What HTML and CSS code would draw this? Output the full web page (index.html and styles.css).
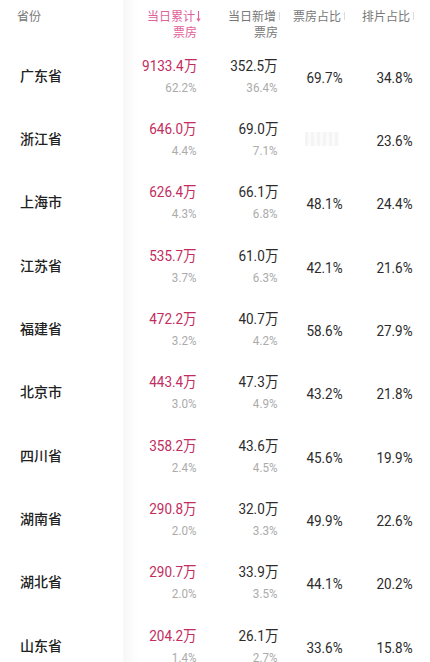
FILE: index.html
```html
<!DOCTYPE html>
<html lang="zh-CN">
<head>
<meta charset="utf-8">
<link rel="stylesheet" href="styles.css">
</head>
<body>
<div class="table">
  <div class="row head">
    <div class="cell name"><span class="h">省份</span></div>
    <div class="cell hc active"><span class="h">当日累计<svg class="sort" viewBox="0 0 5 12" width="5" height="12"><path d="M2.5 1V10.5M0.8 8.5L2.5 10.8L4.2 8.5" fill="none" stroke="currentColor" stroke-width="1.1"/></svg><br>票房<i class="pad"></i></span></div>
    <div class="cell hc"><span class="h">当日新增<svg class="sort" viewBox="0 0 5 12" width="5" height="12"><path d="M2.5 2V10" fill="none" stroke="currentColor" stroke-width="1.1"/></svg><br>票房<i class="pad"></i></span></div>
    <div class="cell hc"><span class="h">票房占比<svg class="sort" viewBox="0 0 5 12" width="5" height="12"><path d="M2.5 2V10" fill="none" stroke="currentColor" stroke-width="1.1"/></svg></span></div>
    <div class="cell hc last"><span class="h">排片占比<svg class="sort" viewBox="0 0 5 12" width="5" height="12"><path d="M2.5 2V10" fill="none" stroke="currentColor" stroke-width="1.1"/></svg></span></div>
  </div>

  <div class="row">
    <div class="cell name">广东省</div>
    <div class="cell val"><span class="main pink">9133.4万</span><span class="sub">62.2%</span></div>
    <div class="cell val"><span class="main">352.5万</span><span class="sub">36.4%</span></div>
    <div class="cell pct"><span class="p">69.7%</span></div>
    <div class="cell pct last"><span class="p">34.8%</span></div>
  </div>
  <div class="row">
    <div class="cell name">浙江省</div>
    <div class="cell val"><span class="main pink">646.0万</span><span class="sub">4.4%</span></div>
    <div class="cell val"><span class="main">69.0万</span><span class="sub">7.1%</span></div>
    <div class="cell pct"><span class="blur"></span></div>
    <div class="cell pct last"><span class="p">23.6%</span></div>
  </div>
  <div class="row">
    <div class="cell name">上海市</div>
    <div class="cell val"><span class="main pink">626.4万</span><span class="sub">4.3%</span></div>
    <div class="cell val"><span class="main">66.1万</span><span class="sub">6.8%</span></div>
    <div class="cell pct"><span class="p">48.1%</span></div>
    <div class="cell pct last"><span class="p">24.4%</span></div>
  </div>
  <div class="row">
    <div class="cell name">江苏省</div>
    <div class="cell val"><span class="main pink">535.7万</span><span class="sub">3.7%</span></div>
    <div class="cell val"><span class="main">61.0万</span><span class="sub">6.3%</span></div>
    <div class="cell pct"><span class="p">42.1%</span></div>
    <div class="cell pct last"><span class="p">21.6%</span></div>
  </div>
  <div class="row">
    <div class="cell name">福建省</div>
    <div class="cell val"><span class="main pink">472.2万</span><span class="sub">3.2%</span></div>
    <div class="cell val"><span class="main">40.7万</span><span class="sub">4.2%</span></div>
    <div class="cell pct"><span class="p">58.6%</span></div>
    <div class="cell pct last"><span class="p">27.9%</span></div>
  </div>
  <div class="row">
    <div class="cell name">北京市</div>
    <div class="cell val"><span class="main pink">443.4万</span><span class="sub">3.0%</span></div>
    <div class="cell val"><span class="main">47.3万</span><span class="sub">4.9%</span></div>
    <div class="cell pct"><span class="p">43.2%</span></div>
    <div class="cell pct last"><span class="p">21.8%</span></div>
  </div>
  <div class="row">
    <div class="cell name">四川省</div>
    <div class="cell val"><span class="main pink">358.2万</span><span class="sub">2.4%</span></div>
    <div class="cell val"><span class="main">43.6万</span><span class="sub">4.5%</span></div>
    <div class="cell pct"><span class="p">45.6%</span></div>
    <div class="cell pct last"><span class="p">19.9%</span></div>
  </div>
  <div class="row">
    <div class="cell name">湖南省</div>
    <div class="cell val"><span class="main pink">290.8万</span><span class="sub">2.0%</span></div>
    <div class="cell val"><span class="main">32.0万</span><span class="sub">3.3%</span></div>
    <div class="cell pct"><span class="p">49.9%</span></div>
    <div class="cell pct last"><span class="p">22.6%</span></div>
  </div>
  <div class="row">
    <div class="cell name">湖北省</div>
    <div class="cell val"><span class="main pink">290.7万</span><span class="sub">2.0%</span></div>
    <div class="cell val"><span class="main">33.9万</span><span class="sub">3.5%</span></div>
    <div class="cell pct"><span class="p">44.1%</span></div>
    <div class="cell pct last"><span class="p">20.2%</span></div>
  </div>
  <div class="row">
    <div class="cell name">山东省</div>
    <div class="cell val"><span class="main pink">204.2万</span><span class="sub">1.4%</span></div>
    <div class="cell val"><span class="main">26.1万</span><span class="sub">2.7%</span></div>
    <div class="cell pct"><span class="p">33.6%</span></div>
    <div class="cell pct last"><span class="p">15.8%</span></div>
  </div>
</div>
</body>
</html>
```
FILE: styles.css
```css
* { box-sizing: border-box; }
html, body {
  margin: 0;
  padding: 0;
  background: #ffffff;
  overflow: hidden;
}
body {
  font-family: "Noto Sans CJK SC", "Noto Sans", sans-serif;
  color: #2b2b2b;
}
.table {
  width: 430px;
  display: flex;
  flex-direction: column;
  background: linear-gradient(90deg, #ffffff 0 122px, #f7f7f7 124px, #fdfdfd 134px, #ffffff 140px);
}
.row {
  display: grid;
  grid-template-columns: 130px 72px 81px 65px 1fr;
  height: 63.33px;
  align-items: center;
}
.row.head {
  height: 43px;
  align-items: start;
}
.cell {
  text-align: right;
  padding-right: 5px;
}
.cell.name {
  text-align: left;
  padding-left: 20px;
  font-size: 14px;
  font-weight: 500;
  color: #222;
  height: 100%;
  display: flex;
  align-items: center;
}
.cell.last { padding-right: 17px; }
.head .cell {
  padding-top: 8px;
  font-size: 12px;
  line-height: 16px;
  color: #777;
  padding-right: 1px;
}
.head .cell.name {
  align-items: flex-start;
  padding-left: 17px;
  font-weight: 400;
  font-size: 12px;
  color: #777;
}
.head .cell.last { padding-right: 14px; }
.head .active { color: #e0619a; }
.h { display: inline-block; }
.sort {
  display: inline-block;
  vertical-align: -1px;
  margin-left: 1px;
  color: #ddd;
}
.active .sort { color: #e0619a; }
.pad { display: inline-block; width: 4px; }
.main, .sub, .p {
  font-family: "Roboto", sans-serif;
  display: inline-block;
  transform-origin: right center;
}
.val {
  display: flex;
  flex-direction: column;
  align-items: flex-end;
  padding-top: 4px;
}
.main {
  font-size: 15px;
  line-height: 20px;
  color: #2b2b2b;
  transform: scaleX(0.9);
}
.main.pink { color: #c22c5e; }
.sub {
  margin-top: 2px;
  font-size: 12.5px;
  line-height: 20px;
  color: #ababab;
  transform: scaleX(0.93);
}
.pct {
  padding-top: 2px;
}
.p {
  font-size: 15.5px;
  color: #2b2b2b;
  transform: scaleX(0.87);
}
.blur {
  display: inline-block;
  width: 34px;
  height: 14px;
  margin-right: 4px;
  background: repeating-linear-gradient(90deg, #f2f2f2 0 3px, #fafafa 3px 6px);
  opacity: 0.8;
}
```
